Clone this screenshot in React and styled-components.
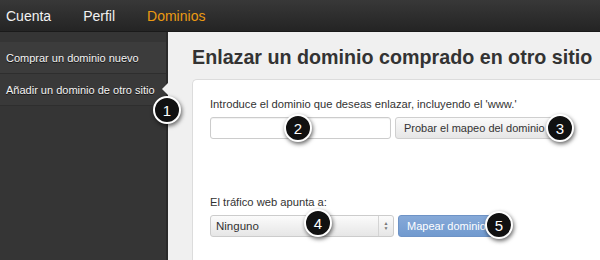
import React from "react";
import styled, { createGlobalStyle } from "styled-components";

const Global = createGlobalStyle`
  html, body { margin: 0; padding: 0; }
  body { width: 600px; height: 260px; overflow: hidden; font-family: "Liberation Sans", Arial, sans-serif; }
`;

const Page = styled.div`
  width: 600px;
  height: 260px;
  display: flex;
  flex-direction: column;
  overflow: hidden;
  position: relative;
`;

const TopBar = styled.div`
  height: 32px;
  flex: none;
  display: flex;
  align-items: center;
  padding-left: 6px;
  gap: 32px;
  background: linear-gradient(#383838, #242424);
  border-bottom: 1px solid #1a1a1a;
  box-sizing: border-box;
`;

const TopLink = styled.span`
  font-size: 14px;
  color: ${(p) => (p.$active ? "#eb9a12" : "#f2f2f2")};
`;

const Body = styled.div`
  flex: 1;
  display: flex;
  min-height: 0;
`;

const Sidebar = styled.div`
  width: 166px;
  flex: none;
  background: #353535;
  border-right: 2px solid #2a2a2a;
  padding-top: 10px;
  position: relative;
`;

const SideItem = styled.div`
  height: 31px;
  display: flex;
  align-items: center;
  padding-left: 6px;
  font-size: 11px;
  color: #f4f4f4;
  background: ${(p) => (p.$active ? "#393939" : "#3c3c3c")};
  border-bottom: 1px solid #2e2e2e;
  text-shadow: 0 1px 0 #111;
`;

const Notch = styled.div`
  position: absolute;
  right: -2px;
  top: 51px;
  width: 0;
  height: 0;
  border-top: 6px solid transparent;
  border-bottom: 6px solid transparent;
  border-right: 6px solid #f0f0f0;
`;

const Main = styled.div`
  flex: 1;
  background: #f0f0f0;
  padding-left: 24px;
  display: flex;
  flex-direction: column;
`;

const Title = styled.h1`
  margin: 0;
  height: 47px;
  padding-top: 3px;
  box-sizing: border-box;
  display: flex;
  align-items: center;
  font-size: 19.7px;
  font-weight: bold;
  color: #333;
  white-space: nowrap;
`;

const Card = styled.div`
  flex: 1;
  background: #fff;
  border-top: 1px solid #dcdcdc;
  border-left: 1px solid #dcdcdc;
  border-top-left-radius: 5px;
  padding: 18px 0 0 17px;
  display: flex;
  flex-direction: column;
`;

const Label = styled.div`
  font-size: 11.2px;
  color: #333;
  margin-bottom: 7px;
`;

const Row = styled.div`
  display: flex;
  gap: 4px;
  align-items: center;
`;

const TextInput = styled.div`
  width: 181px;
  height: 22px;
  box-sizing: border-box;
  border: 1px solid #ccc;
  border-radius: 3px;
  background: #fff;
  box-shadow: inset 0 1px 1px rgba(0, 0, 0, 0.06);
`;

const Button = styled.div`
  height: 22px;
  box-sizing: border-box;
  padding: 0 8px;
  display: flex;
  align-items: center;
  font-size: 11px;
  border-radius: 3px;
  color: ${(p) => (p.$primary ? "#fff" : "#333")};
  background: ${(p) =>
    p.$primary
      ? "linear-gradient(#86a9d8, #719acf)"
      : "linear-gradient(#fafafa, #e6e6e6)"};
  border: 1px solid ${(p) => (p.$primary ? "#6e93c6" : "#cfcfcf")};
`;

const Select = styled.div`
  width: 184px;
  height: 22px;
  box-sizing: border-box;
  border: 1px solid #ccc;
  border-radius: 3px;
  background: linear-gradient(#fbfbfb, #e6e6e6);
  display: flex;
  align-items: center;
  font-size: 11.5px;
  color: #333;
  padding-left: 5px;
  position: relative;
`;

const SelectArrows = styled.span`
  position: absolute;
  right: 0;
  top: 0;
  bottom: 0;
  width: 14px;
  border-left: 1px solid #d4d4d4;
  display: flex;
  align-items: center;
  justify-content: center;
  font-size: 5px;
  line-height: 5px;
  color: #777;
  flex-direction: column;
`;

const Spacer = styled.div`
  height: ${(p) => p.$h}px;
`;

const Badge = styled.div`
  position: absolute;
  left: ${(p) => p.$x - 14}px;
  top: ${(p) => p.$y - 14}px;
  width: 24px;
  height: 24px;
  border-radius: 50%;
  background: #111;
  border: 2px solid #fff;
  box-shadow: 1px 2px 4px rgba(0, 0, 0, 0.6);
  color: #fff;
  font-size: 15px;
  display: flex;
  align-items: center;
  justify-content: center;
  font-family: "Liberation Sans", Arial, sans-serif;
`;

const badges = [
  { n: 1, x: 167, y: 110 },
  { n: 2, x: 298, y: 128 },
  { n: 3, x: 560, y: 128 },
  { n: 4, x: 318, y: 223 },
  { n: 5, x: 499, y: 225 },
];

export default function App() {
  return (
    <Page>
      <Global />
      <TopBar>
        <TopLink>Cuenta</TopLink>
        <TopLink>Perfil</TopLink>
        <TopLink $active>Dominios</TopLink>
      </TopBar>
      <Body>
        <Sidebar>
          <SideItem>Comprar un dominio nuevo</SideItem>
          <SideItem $active>Añadir un dominio de otro sitio</SideItem>
          <Notch />
        </Sidebar>
        <Main>
          <Title>Enlazar un dominio comprado en otro sitio</Title>
          <Card>
            <Label>Introduce el dominio que deseas enlazar, incluyendo el 'www.'</Label>
            <Row>
              <TextInput />
              <Button>Probar el mapeo del dominio</Button>
            </Row>
            <Spacer $h={57} />
            <Label>El tráfico web apunta a:</Label>
            <Row>
              <Select>
                Ninguno
                <SelectArrows>
                  <span>▲</span>
                  <span>▼</span>
                </SelectArrows>
              </Select>
              <Button $primary>Mapear dominio</Button>
            </Row>
          </Card>
        </Main>
      </Body>
      {badges.map((b) => (
        <Badge key={b.n} $x={b.x} $y={b.y}>
          {b.n}
        </Badge>
      ))}
    </Page>
  );
}
